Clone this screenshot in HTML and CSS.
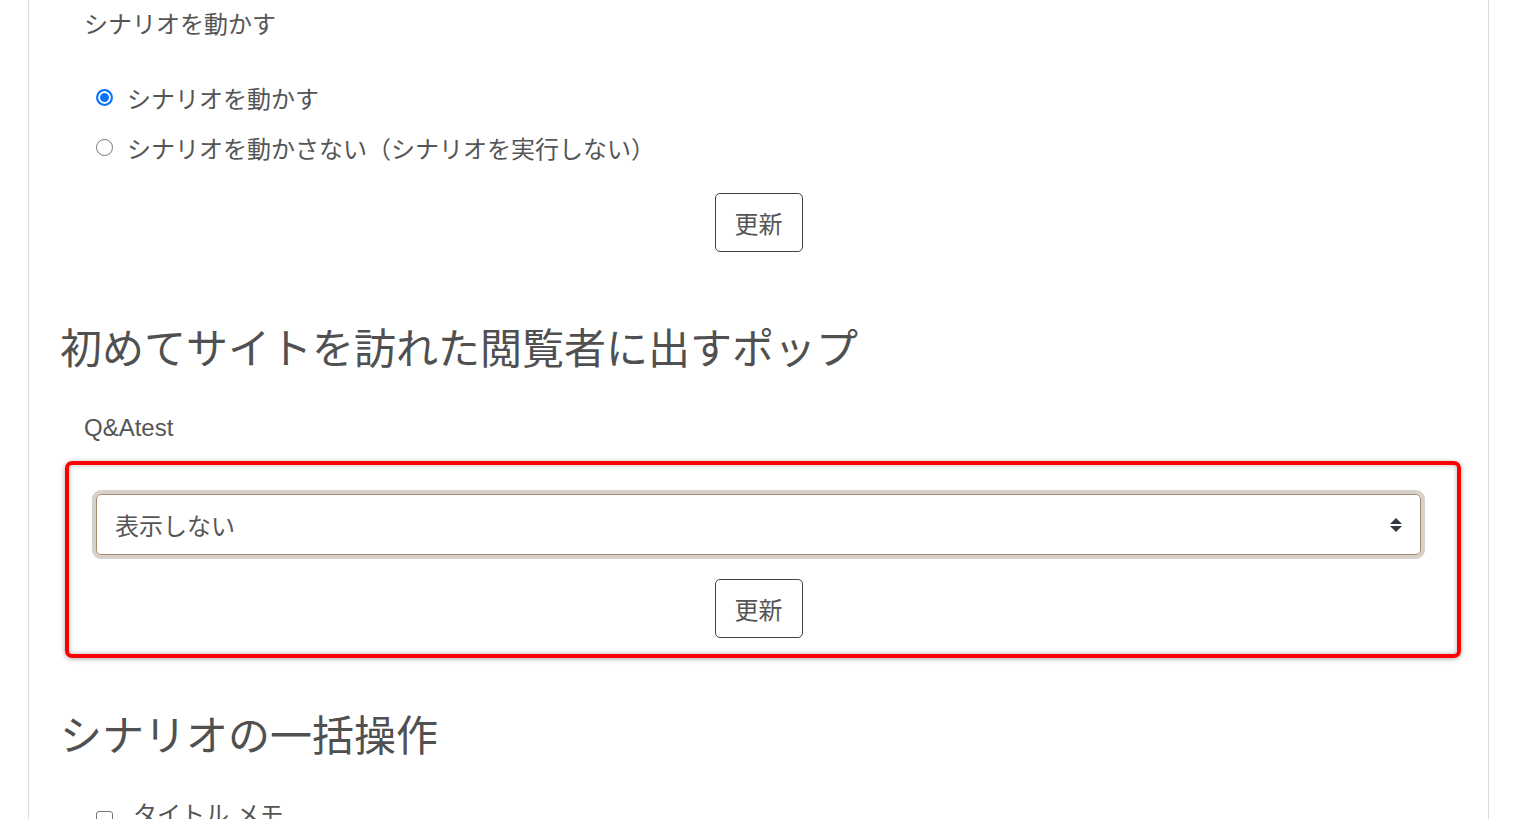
FILE: index.html
```html
<html>
  <head>
    <title>シナリオ設定</title>
    <link rel="stylesheet" href="styles.css">
  </head>
  <body>
    <div class="card">
      <div class="field-label">シナリオを動かす</div>
      <div class="radios">
        <label class="choice"><input type="radio" name="run" checked> シナリオを動かす</label>
        <label class="choice"><input type="radio" name="run"> シナリオを動かさない（シナリオを実行しない）</label>
      </div>
      <div class="actions"><button class="btn">更新</button></div>

      <h2 class="heading">初めてサイトを訪れた閲覧者に出すポップ</h2>
      <div class="field-label qa">Q&amp;Atest</div>
      <div class="highlight">
        <div class="select">
          <span>表示しない</span>
          <svg class="arrows" width="12" height="16" viewBox="0 0 12 16">
            <path d="M6 1 L12 7 L0 7 Z" fill="#343a40"/>
            <path d="M0 9 L12 9 L6 15 Z" fill="#343a40"/>
          </svg>
        </div>
        <div class="actions tight"><button class="btn">更新</button></div>
      </div>

      <h2 class="heading second">シナリオの一括操作</h2>
      <label class="choice check"><input type="checkbox"> タイトル メモ</label>
    </div>
  </body>
</html>
```

FILE: styles.css
```css
body {
  margin: 0;
  background: #fff;
  color: #555;
  font-family: "Liberation Sans", "Noto Sans CJK JP", sans-serif;
  height: 819px;
  overflow: hidden;
}
.card {
  margin-left: 28px;
  width: 1397px;
  padding: 0 31px;
  border-left: 1px solid #dcdcdc;
  border-right: 1px solid #dcdcdc;
  min-height: 819px;
}
.field-label {
  font-size: 24px;
  line-height: 33px;
  padding-top: 8px;
  margin-left: 24px;
}
.field-label.qa {
  padding-top: 0;
  margin-top: 40px;
}
.radios {
  margin-top: 31px;
  margin-left: 36px;
}
.choice {
  display: flex;
  align-items: center;
  height: 50px;
  font-size: 24px;
  gap: 10px;
}
.choice input {
  appearance: none;
  margin: 0 4px 0 0;
  width: 17px;
  height: 17px;
  border: 1.5px solid #767676;
  border-radius: 50%;
  background: #fff;
}
.choice input:checked {
  border: 2px solid #0b74f7;
  background: #0b74f7;
  box-shadow: inset 0 0 0 2px #fff;
}
.actions {
  display: flex;
  justify-content: center;
  margin-top: 21px;
}
.actions.tight {
  margin-top: 24px;
}
.btn {
  font-family: "Noto Sans CJK JP", sans-serif;
  font-size: 24px;
  line-height: 32px;
  height: 59px;
  padding: 0 19px;
  color: #555;
  background: #fff;
  border: 1px solid #4b4036;
  border-radius: 5px;
}
.heading {
  font-family: "Noto Sans CJK JP", sans-serif;
  font-weight: normal;
  font-size: 42px;
  line-height: 50px;
  margin: 69px 0 0 0;
  color: #505050;
}
.heading.second {
  margin-top: 50px;
}
.highlight {
  margin: 17px -4px 0 5px;
  padding: 29px 36px 16px 27px;
  border: 4px solid #f00;
  border-radius: 7px;
  box-shadow: 0 1px 5px rgba(0,0,0,.35), inset 0 0 5px rgba(0,0,0,.3);
}
.select {
  display: flex;
  align-items: center;
  justify-content: space-between;
  height: 59px;
  padding: 0 18px;
  border: 1px solid #a98a6b;
  border-radius: 5px;
  box-shadow: 0 0 0 4px #d6d1ca;
  font-family: "Noto Sans CJK JP", sans-serif;
  font-size: 24px;
}
.check {
  margin: 38px 0 0 36px;
  height: 33px;
  gap: 16px;
}
.check input {
  margin-top: 14px;
  border-radius: 3px;
  border: 1.5px solid #767676;
}
```
